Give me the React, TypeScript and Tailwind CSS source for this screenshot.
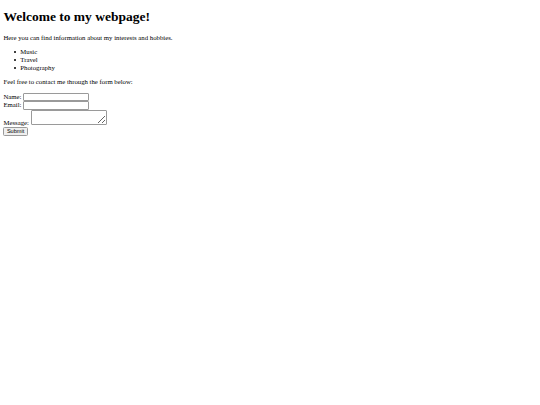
export default function App() {
  const items = ["Music", "Travel", "Photography"];
  return (
    <div className="min-h-[405px] bg-white px-[3.4px] py-px font-['Liberation_Serif',serif] text-[6.75px] leading-[7.8px] text-black">
      <h1 className="mt-[8px] mb-[9px] text-[13.5px] font-bold leading-[15.5px]">Welcome to my webpage!</h1>
      <p className="my-[6.75px]">Here you can find information about my interests and hobbies.</p>
      <ul className="my-[6.75px] list-none pl-[16.9px]">
        {items.map((t) => (
          <li key={t} className="relative before:absolute before:left-[-6.5px] before:top-[3px] before:h-[2.3px] before:w-[2.3px] before:rounded-full before:bg-black before:content-['']">
            {t}
          </li>
        ))}
      </ul>
      <p className="my-[6.75px]">Feel free to contact me through the form below:</p>
      <form>
        <label>Name: </label>
        <input type="text" className="h-[8.5px] w-[66px] rounded-[1px] border border-[#9a9a9a] px-[1px] align-baseline font-['Liberation_Sans',sans-serif] text-[5.6px]" />
        <br />
        <label>Email: </label>
        <input type="email" className="h-[8.5px] w-[66px] rounded-[1px] border border-[#9a9a9a] px-[1px] align-baseline font-['Liberation_Sans',sans-serif] text-[5.6px]" />
        <br />
        <label>Message: </label>
        <textarea className="h-[15px] w-[76px] resize rounded-[1px] border border-[#9a9a9a] align-baseline font-['Liberation_Mono',monospace] text-[5.6px]" />
        <br />
        <button type="submit" className="h-[9px] rounded-[1.5px] border border-[#9a9a9a] bg-[#efefef] px-[2.5px] align-baseline font-['Liberation_Sans',sans-serif] text-[5.6px] leading-[6px]">Submit</button>
      </form>
    </div>
  );
}
